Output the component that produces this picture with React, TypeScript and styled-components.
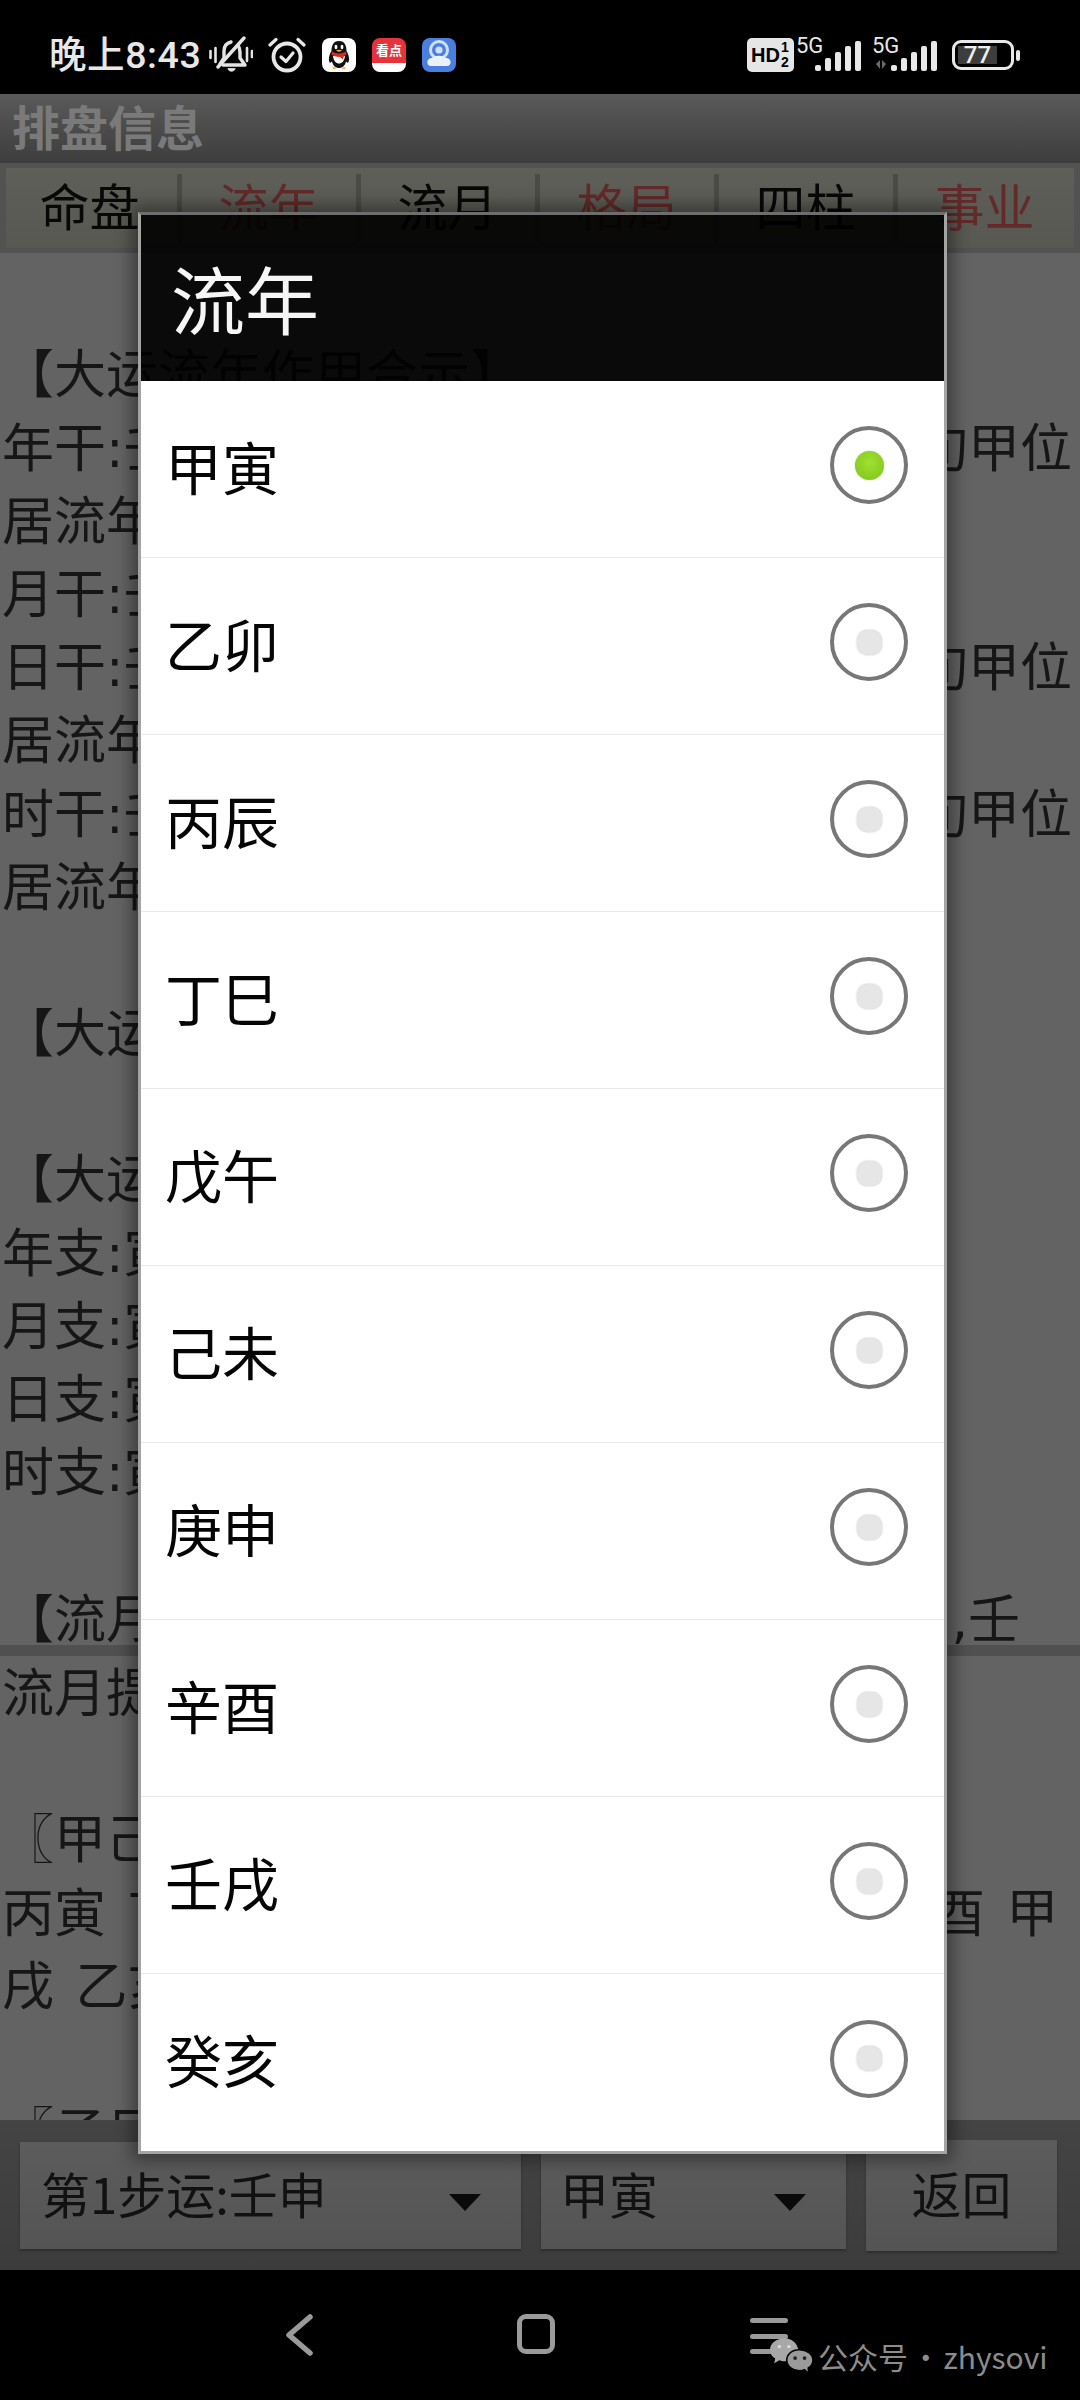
import React from "react";
import styled, { createGlobalStyle } from "styled-components";

const CJK = `"Noto Sans CJK SC", sans-serif`;
const BODY = `"DejaVu Sans", "Noto Sans CJK SC", sans-serif`;

const Global = createGlobalStyle`
  html, body { margin: 0; padding: 0; background: #000; }
  * { box-sizing: border-box; }
`;

const Page = styled.div`
  position: relative;
  width: 1080px;
  height: 2400px;
  display: flex;
  flex-direction: column;
  overflow: hidden;
  background: #000;
  font-family: ${CJK};
`;

const StatusBar = styled.div`
  height: 94px;
  flex: none;
  background: #000;
  display: flex;
  align-items: center;
  justify-content: space-between;
  padding: 22px 60px 6px 49px;
  color: #e8e8e8;
`;
const StatusGroup = styled.div`
  display: flex;
  align-items: center;
`;
const Clock = styled.span`
  font: 500 37.5px/40px Roboto, ${CJK};
  letter-spacing: 0.6px;
  width: 160px;
  white-space: nowrap;
`;
const AppIcon = styled.div<{ $bg: string }>`
  width: 34px;
  height: 34px;
  border-radius: 8px;
  background: ${(p) => p.$bg};
  overflow: hidden;
  position: relative;
  margin-left: 16px;
`;
const ReadLabel = styled.span`
  position: absolute;
  left: 0;
  right: 0;
  top: 4px;
  text-align: center;
  color: #fff;
  font: 700 13px/16px ${CJK};
`;
const HdBadge = styled.div`
  width: 47px;
  height: 34px;
  border-radius: 5px;
  background: #e6e6e6;
  color: #000;
  display: flex;
  align-items: center;
  padding-left: 4px;
  font: 700 20px/1 "Liberation Sans", sans-serif;
`;
const HdSim = styled.span`
  display: flex;
  flex-direction: column;
  font: 700 14px/15px "Liberation Sans", sans-serif;
  margin-left: 1px;
`;
const Signal = styled.div<{ $gap: number }>`
  position: relative;
  width: 62px;
  height: 34px;
  margin-left: ${(p) => p.$gap}px;
`;
const SignalLabel = styled.span`
  position: absolute;
  left: -4px;
  top: -3px;
  font: 400 22px/22px Roboto, sans-serif;
  color: #e8e8e8;
`;
const Battery = styled.div`
  width: 62px;
  height: 30px;
  border: 3px solid #e8e8e8;
  border-radius: 9px;
  margin-left: 14px;
  padding: 3px 0 3px 3px;
  display: flex;
`;
const BatteryFill = styled.div`
  width: 39px;
  height: 18px;
  background: #3d3d3d;
  color: #eee;
  font: 500 24px/18px Roboto, sans-serif;
  text-align: center;
`;
const BatteryNub = styled.div`
  width: 4px;
  height: 11px;
  margin-left: 2px;
  border-radius: 2px;
  background: #e8e8e8;
`;

const Header = styled.div`
  height: 69px;
  flex: none;
  background: linear-gradient(#5a5a5a, #3d3d3d);
  color: #7a7a7a;
  font: 700 48px/63px ${CJK};
  padding-left: 12px;
`;

const TabStrip = styled.div`
  height: 90px;
  flex: none;
  padding: 5px 6px 5px 6px;
  background: #525252;
  display: flex;
`;
const Tab = styled.div<{ $red: boolean; $first: boolean }>`
  flex: none;
  width: ${(p) => (p.$first ? 173 : 179)}px;
  padding-right: ${(p) => (p.$first ? 6 : 0)}px;
  position: relative;
  background: linear-gradient(#5f5f59, #585852);
  color: ${(p) => (p.$red ? "#622a28" : "#080808")};
  font: 400 50px/73px ${CJK};
  text-align: center;
  &::before {
    content: "";
    display: ${(p) => (p.$first ? "none" : "block")};
    position: absolute;
    left: -2px;
    top: 6px;
    bottom: 6px;
    width: 5px;
    background: #4a4a47;
  }
`;

const Panel = styled.div<{ $height: number; $shift: number }>`
  height: ${(p) => p.$height}px;
  flex: none;
  overflow: hidden;
  background: #636363;
  color: #161616;
  font: 400 52px/73.2px ${BODY};
  word-spacing: 5px;
  padding: ${(p) => p.$shift}px 0 0 2px;
`;
const ScrolledText = styled.div`
  margin-top: -63px;
`;
const Line = styled.div<{ $right?: number }>`
  height: 73.2px;
  display: flex;
  justify-content: space-between;
  white-space: nowrap;
  overflow: hidden;
  padding-right: ${(p) => p.$right ?? 8}px;
`;
const Divider = styled.div`
  height: 11px;
  flex: none;
  background: #505050;
`;

const Toolbar = styled.div`
  height: 150px;
  flex: none;
  background: linear-gradient(#444, #3c3c3c);
  display: flex;
  align-items: center;
  gap: 20px;
  padding: 0 23px 0 20px;
`;
const Spinner = styled.div<{ $width: number; $pad: number }>`
  width: ${(p) => p.$width}px;
  height: 107px;
  display: flex;
  align-items: center;
  justify-content: space-between;
  padding: 0 40px 6px ${(p) => p.$pad}px;
  background: linear-gradient(#5c5c5c, #545454);
  box-shadow: 0 2px 2px #2e2e2e;
  color: #111;
  font: 400 49px/1 ${CJK};
`;
const Arrow = styled.span`
  width: 0;
  height: 0;
  margin-top: 20px;
  border-left: 16px solid transparent;
  border-right: 16px solid transparent;
  border-top: 17px solid #0a0a0a;
`;
const ReturnButton = styled.div`
  flex: 1;
  height: 111px;
  display: flex;
  align-items: center;
  justify-content: center;
  padding-bottom: 7px;
  background: linear-gradient(#5c5c5c, #545454);
  box-shadow: 0 2px 2px #2e2e2e;
  color: #111;
  font: 400 50px/1 ${CJK};
`;

const NavBar = styled.div`
  flex: 1;
  background: #000;
  position: relative;
  color: #9a9a9a;
`;
const NavIcons = styled.div`
  display: flex;
  align-items: flex-start;
  padding: 44px 0 0 285px;
`;
const NavSquare = styled.div`
  width: 38px;
  height: 40px;
  margin-left: 204px;
  border: 5px solid #9a9a9a;
  border-radius: 9px;
`;
const NavMenu = styled.div`
  width: 38px;
  height: 36px;
  margin: 4px 0 0 195px;
  display: flex;
  flex-direction: column;
  justify-content: space-between;
`;
const NavMenuBar = styled.span`
  height: 5px;
  border-radius: 3px;
  background: #9a9a9a;
`;
const Watermark = styled.div`
  position: absolute;
  left: 770px;
  top: 67px;
  display: flex;
  align-items: center;
  gap: 4px;
  color: #8c8c8c;
  font: 400 30px/38px ${CJK};
  word-spacing: -4px;
  white-space: nowrap;
`;

const Dialog = styled.div`
  position: absolute;
  left: 138px;
  top: 212px;
  width: 809px;
  border: 3px solid #a4a4a4;
  border-top-color: #6e6e6e;
  box-shadow: 0 0 16px 6px rgba(0, 0, 0, 0.4);
`;
const DialogTitle = styled.div`
  height: 166px;
  padding: 2px 0 0 30px;
  background: rgba(0, 0, 0, 0.9);
  color: #f6f6f6;
  font: 400 74px/159px ${CJK};
`;
const OptionList = styled.div`
  background: #fff;
`;
const Option = styled.div`
  height: 177px;
  display: flex;
  align-items: center;
  justify-content: space-between;
  padding: 0 36px 8px 24px;
  border-bottom: 1px solid #e9e9e9;
  color: #050505;
  font: 400 57px/1 ${CJK};
  &:last-child { border-bottom: none; }
`;
const Radio = styled.span<{ $on: boolean }>`
  width: 78px;
  height: 78px;
  border-radius: 50%;
  border: 4px solid #777;
  display: flex;
  align-items: center;
  justify-content: center;
  &::after {
    content: "";
    width: ${(p) => (p.$on ? 29 : 25)}px;
    height: ${(p) => (p.$on ? 29 : 25)}px;
    border-radius: ${(p) => (p.$on ? "50%" : "42%")};
    background: ${(p) => (p.$on ? "radial-gradient(circle at 50% 40%, #a0e030, #7cc41a)" : "#e6e6e6")};
    box-shadow: ${(p) => (p.$on ? "0 0 1px #6a9a20" : "0 0 2px #bbb")};
  }
`;

const BellOff = () => (
  <svg width="44" height="38" viewBox="0 0 44 38" fill="none" stroke="#e4e4e4" strokeWidth="3.4" strokeLinecap="round" strokeLinejoin="round">
    <path d="M11 28 L15 22 V15 C15 10 18 7 22 6 M29 9 C30 11 31 13 31 16 V22 L36 29 H14" />
    <path d="M9 31 L35 2" />
    <path d="M19 33 C20 36 25 36 26 33 Z" fill="#e4e4e4" strokeWidth="1" />
    <path d="M1.5 15 V22 M6.5 12 V26 M38 12 V25 M43 15 V21" strokeWidth="2.6" />
  </svg>
);
const AlarmClock = () => (
  <svg width="38" height="36" viewBox="0 0 38 36" fill="none" stroke="#e8e8e8" strokeLinecap="round" strokeLinejoin="round" style={{ marginLeft: 15 }}>
    <circle cx="19" cy="20" r="13.5" strokeWidth="3.8" />
    <path d="M13 20 L18 24.5 L25 16" strokeWidth="3.2" />
    <path d="M2 8 L8 2.5 M36 8 L30 2.5" strokeWidth="3.2" />
  </svg>
);
const Penguin = () => (
  <svg width="34" height="34" viewBox="0 0 34 34">
    <path d="M17 3 C11 3 9.5 8 9.5 13 C7 17 6 22 8 25 L10 23.5 C11 28 14 30 17 30 C20 30 23 28 24 23.5 L26 25 C28 22 27 17 24.5 13 C24.5 8 23 3 17 3 Z" fill="#111" />
    <path d="M11 18 C12 28 22 28 23 18 Z" fill="#fff" />
    <path d="M10 13.5 C14 16 20 16 24 13.5 L24.5 16.5 C22 18 21.5 18 21 21.5 L18 19 C14 19 11 18 9.5 16.5 Z" fill="#d92a26" />
    <ellipse cx="14" cy="9" rx="1.4" ry="2.2" fill="#fff" />
    <ellipse cx="20" cy="9" rx="1.4" ry="2.2" fill="#fff" />
    <path d="M14 12.5 C15.5 11.5 18.5 11.5 20 12.5 C18.5 14 15.5 14 14 12.5 Z" fill="#f2b13a" />
    <path d="M11 29 C9 31 13 32 15 30 M23 29 C25 31 21 32 19 30" fill="#f2b13a" />
  </svg>
);
const CloudCam = () => (
  <svg width="34" height="34" viewBox="0 0 34 34">
    <circle cx="17" cy="12" r="8.5" fill="none" stroke="#cfe0fa" strokeWidth="3" />
    <circle cx="17" cy="12" r="3.6" fill="#cfe0fa" />
    <path d="M9 28 C4 28 4 20 10 20 C12 17 22 17 24 20 C30 20 30 28 25 28 Z" fill="#e9f1fd" />
  </svg>
);
const Bars = ({ mid }: { mid: boolean }) => (
  <svg width="62" height="34" viewBox="0 0 62 34" style={{ position: "absolute", left: 0, top: 0 }}>
    {[0, 1, 2, 3, 4].map((i) => {
      const h = [6, 13, 19, 25, 30][i];
      return <rect key={i} x={15 + i * 10} y={33 - h} width="6" height={h} rx="2" fill="#e8e8e8" />;
    })}
    {mid && <path d="M0 26 L4 22 V31 Z M6 31 V22 L10 26 Z" fill="#6a6a6a" />}
  </svg>
);
const Chevron = () => (
  <svg width="28" height="42" viewBox="0 0 28 42" fill="none" stroke="#9a9a9a" strokeWidth="5.5" strokeLinecap="round" strokeLinejoin="round">
    <path d="M25 3 L4 21 L25 39" />
  </svg>
);
const WeChat = () => (
  <svg width="44" height="38" viewBox="0 0 42 36">
    <path d="M14 1 C6 1 0 6 0 12 C0 16 2 18.5 5 20.5 L4 25 L9 22 C11 23 13 23 15 23 C24 23 28 17 27 12 C26 6 21 1 14 1 Z" fill="#a8a8a8" />
    <path d="M28 12 C20 12 16 17 16 22 C16 28 22 32 28 32 C30 32 31 32 33 31 L37 35 L36.5 29.5 C39 28 41 25 41 22 C41 16 35 12 28 12 Z" fill="#9a9a9a" stroke="#000" strokeWidth="1.5" />
    <circle cx="9" cy="9" r="1.6" fill="#ddd" />
    <circle cx="18" cy="9" r="1.6" fill="#ddd" />
    <circle cx="24" cy="20" r="1.8" fill="#222" />
    <circle cx="33" cy="20" r="1.8" fill="#222" />
  </svg>
);

const tabs = [
  { label: "命盘", red: false },
  { label: "流年", red: true },
  { label: "流月", red: false },
  { label: "格局", red: true },
  { label: "四柱", red: false },
  { label: "事业", red: true },
];

type Row = { left: string; right?: string; pad?: number };

const upperLines: Row[] = [
  { left: "三合局:亥卯未" },
  { left: "" },
  { left: "【大运流年作用合示】" },
  { left: "年干:壬水生扶大运天干落", right: "旬甲位" },
  { left: "居流年十二宫" },
  { left: "月干:壬水生扶大运天干落" },
  { left: "日干:壬水生扶大运天干落", right: "旬甲位" },
  { left: "居流年十二宫" },
  { left: "时干:壬水生扶大运天干落", right: "旬甲位" },
  { left: "居流年十二宫" },
  { left: "" },
  { left: "【大运流年冲克】" },
  { left: "" },
  { left: "【大运地支作用】" },
  { left: "年支:寅木" },
  { left: "月支:寅木" },
  { left: "日支:寅木" },
  { left: "时支:寅木" },
  { left: "" },
  { left: "【流月干支列表】", right: ",壬", pad: 60 },
];

const lowerLines: Row[] = [
  { left: "流月提要" },
  { left: "" },
  { left: "〖甲己之年〗" },
  { left: "丙寅 丁卯 戊辰 己巳 庚午 辛未 壬申 癸酉 甲" },
  { left: "戌 乙亥" },
  { left: "" },
  { left: "〖子日〗" },
];

const options = ["甲寅", "乙卯", "丙辰", "丁巳", "戊午", "己未", "庚申", "辛酉", "壬戌", "癸亥"];

const TextLines = ({ rows }: { rows: Row[] }) => (
  <>
    {rows.map((r, i) => (
      <Line key={i} $right={r.pad}>
        <span>{r.left}</span>
        {r.right && <span>{r.right}</span>}
      </Line>
    ))}
  </>
);

export default function App() {
  return (
    <Page>
      <Global />
      <StatusBar>
        <StatusGroup>
          <Clock>晚上8:43</Clock>
          <BellOff />
          <AlarmClock />
          <AppIcon $bg="#fff"><Penguin /></AppIcon>
          <AppIcon $bg="linear-gradient(#e8323a 0 74%, #fff 74%)"><ReadLabel>看点</ReadLabel></AppIcon>
          <AppIcon $bg="#4a7fe0"><CloudCam /></AppIcon>
        </StatusGroup>
        <StatusGroup>
          <HdBadge>HD<HdSim><span>1</span><span>2</span></HdSim></HdBadge>
          <Signal $gap={6}><SignalLabel>5G</SignalLabel><Bars mid={false} /></Signal>
          <Signal $gap={14}><SignalLabel>5G</SignalLabel><Bars mid /></Signal>
          <Battery><BatteryFill>77</BatteryFill></Battery>
          <BatteryNub />
        </StatusGroup>
      </StatusBar>
      <Header>排盘信息</Header>
      <TabStrip>
        {tabs.map((t, i) => (
          <Tab key={t.label} $red={t.red} $first={i === 0}>{t.label}</Tab>
        ))}
      </TabStrip>
      <Panel $height={1392} $shift={3}>
        <ScrolledText>
          <TextLines rows={upperLines} />
        </ScrolledText>
      </Panel>
      <Divider />
      <Panel $height={464} $shift={2}>
        <TextLines rows={lowerLines} />
      </Panel>
      <Toolbar>
        <Spinner $width={501} $pad={21}>第1步运:壬申<Arrow /></Spinner>
        <Spinner $width={305} $pad={19}>甲寅<Arrow /></Spinner>
        <ReturnButton>返回</ReturnButton>
      </Toolbar>
      <NavBar>
        <NavIcons>
          <Chevron />
          <NavSquare />
          <NavMenu><NavMenuBar /><NavMenuBar /><NavMenuBar /></NavMenu>
        </NavIcons>
        <Watermark><WeChat />公众号 · zhysovi</Watermark>
      </NavBar>
      <Dialog>
        <DialogTitle>流年</DialogTitle>
        <OptionList>
          {options.map((o, i) => (
            <Option key={o}>{o}<Radio $on={i === 0} /></Option>
          ))}
        </OptionList>
      </Dialog>
    </Page>
  );
}
